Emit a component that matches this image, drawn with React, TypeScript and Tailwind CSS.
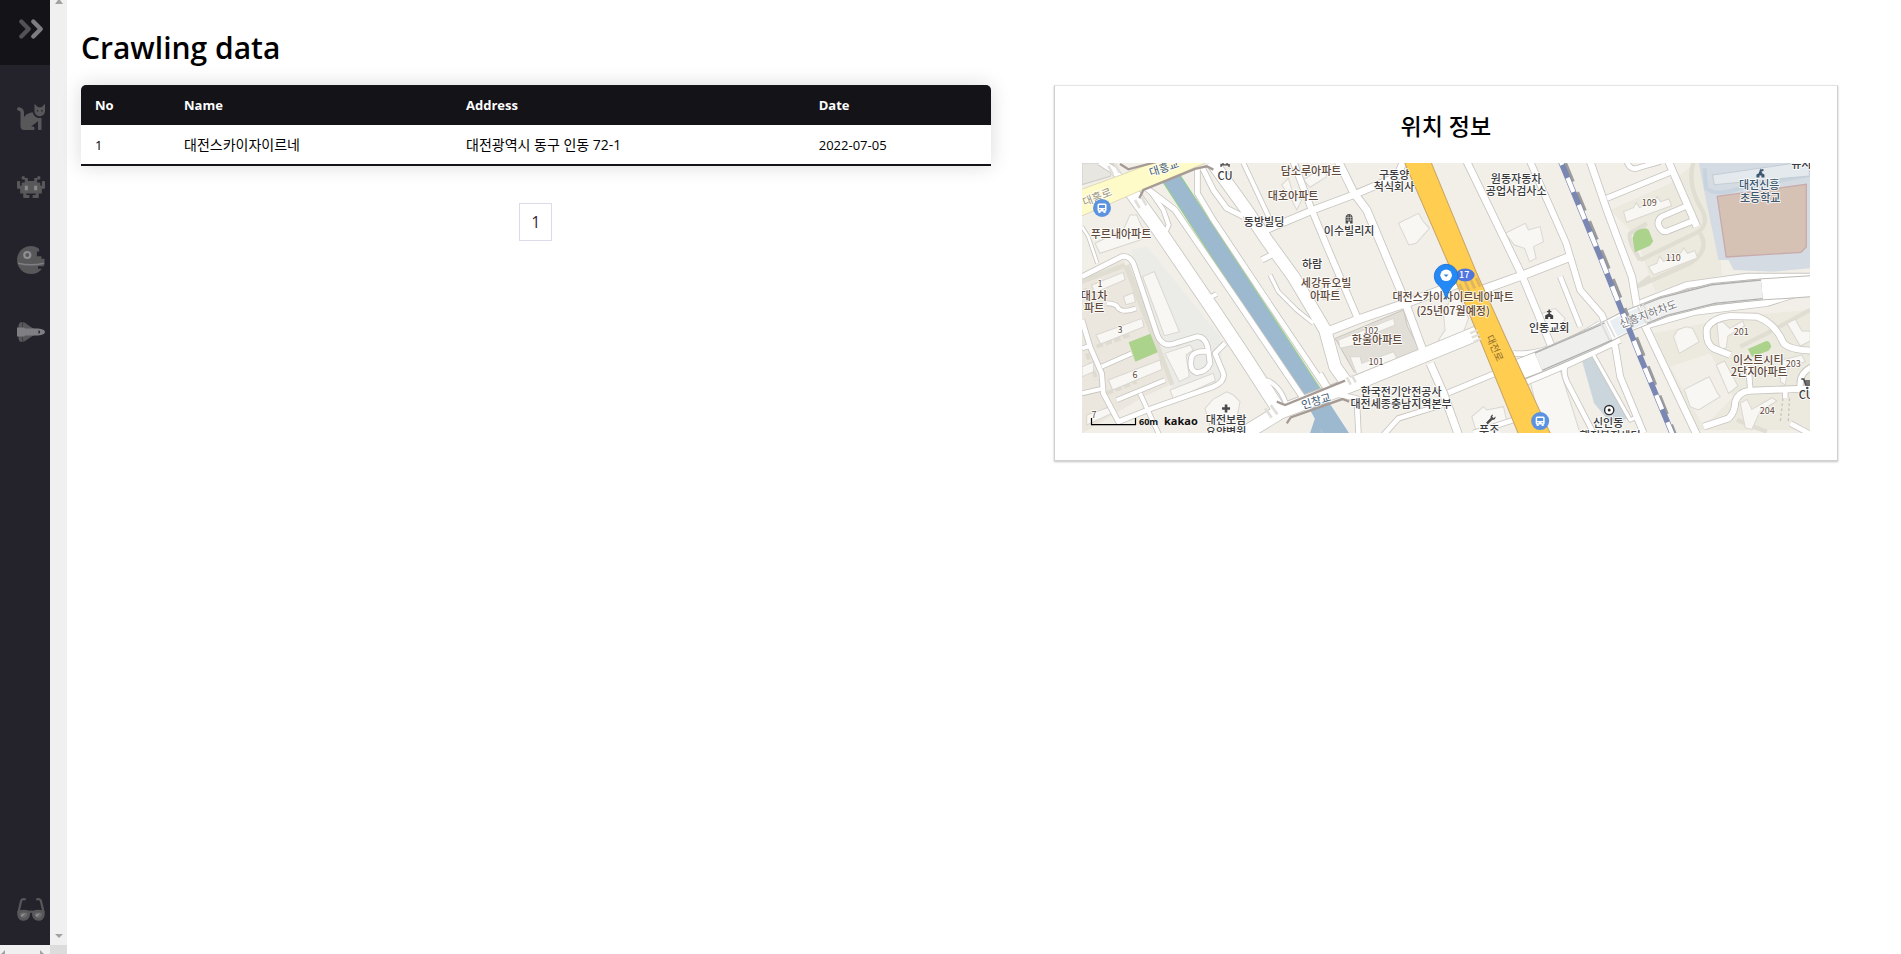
import React from "react";
import { FaCat } from "react-icons/fa";

const DIM = "#58585b";
const LIT = "#7f7f83";

function ChevronsIcon() {
  return (
    <svg viewBox="0 0 28 28" className="size-7" fill="none" strokeWidth="4.4" strokeLinecap="round" strokeLinejoin="round" aria-hidden="true">
      <path d="M4.300 6.500l7.400 7.500-7.400 7.500" stroke="#525254" />
      <path d="M16.300 6.500l7.400 7.500-7.400 7.500" stroke="#7d7d80" />
    </svg>
  );
}

function CatIcon() {
  return <FaCat className="size-7 text-[#58585b]" aria-hidden="true" />;
}

function AlienIcon() {
  return (
    <svg viewBox="0 -16 576 576" className="size-7" aria-hidden="true">
      <path
        fill={DIM}
        d="M560 128h-32a16 16 0 0 0-16 16v80h-32v-48a16 16 0 0 0-16-16h-48V96h48a16 16 0 0 0 16-16V48a16 16 0 0 0-16-16h-32a16 16 0 0 0-16 16v16h-48a16 16 0 0 0-16 16v48H224V80a16 16 0 0 0-16-16h-48V48a16 16 0 0 0-16-16h-32a16 16 0 0 0-16 16v32a16 16 0 0 0 16 16h48v64h-48a16 16 0 0 0-16 16v48H64v-80a16 16 0 0 0-16-16H16a16 16 0 0 0-16 16v128a16 16 0 0 0 16 16h48v80a16 16 0 0 0 16 16h48v80a16 16 0 0 0 16 16h96a16 16 0 0 0 16-16v-32a16 16 0 0 0-16-16h-48v-32h192v32h-48a16 16 0 0 0-16 16v32a16 16 0 0 0 16 16h96a16 16 0 0 0 16-16v-80h48a16 16 0 0 0 16-16v-80h48a16 16 0 0 0 16-16V144a16 16 0 0 0-16-16z"
      />
      <path fill="#8a8a8d" d="M160 224h64v96h-64zM352 224h64v96h-64z" />
    </svg>
  );
}

function DeathStarIcon() {
  return (
    <svg viewBox="0 0 28 28" className="size-7" aria-hidden="true">
      <path
        fill={DIM}
        d="M14 0C6.300 0 0 6.200 0 14s6.300 14 14 14c4.600 0 8.500-2 11-5.300h-4v-2.400h5.800L27.500 18V12.800h-3.100v-2.600h-4.500V5.600h2.500L21.800 2.500C19.500.9 17 0 14 0z"
      />
      <path d="M1.200 17.200Q14 20.500 26.800 17.200" stroke={LIT} strokeWidth="1.500" fill="none" />
      <circle cx="10.300" cy="9" r="3" fill={DIM} stroke="#8f8f92" strokeWidth="2.200" />
    </svg>
  );
}

function ShuttleIcon() {
  return (
    <svg viewBox="0 0 28 28" className="size-7" aria-hidden="true">
      <path
        fill={DIM}
        d="M1.500 14V7.500Q2 4 5 4q3 .2 6 3l4.500 3 3.500 1.500v5L15.500 18 11 21q-3 2.800-6 3-3 0-3.500-3.500z"
      />
      <path stroke="#3a3a3f" strokeWidth=".8" d="M5.500 4v20" />
      <path fill={LIT} d="M0 9.500h7l1 1h13q7 .8 7 3.500t-7 3.500H8l-1 1H0z" />
      <path fill="#24232c" d="M21.500 12.200q1.600.3 1.600 1.800t-1.600 1.800z" />
    </svg>
  );
}

function GlassesIcon() {
  return (
    <svg viewBox="0 0 28 28" className="size-7" aria-hidden="true">
      <path d="M1.500 17L4 6.200Q4.800 3.500 8 4.200M26.500 17L24 6.200Q23.200 3.500 20 4.200" fill="none" stroke={DIM} strokeWidth="2.200" strokeLinecap="round" />
      <path d="M11 17.500Q14 15.700 17 17.500" stroke={DIM} strokeWidth="2.400" fill="none" />
      <path
        d="M1.700 17Q6.500 15.200 11.700 17V19Q11 24.300 6.700 24.300Q2.200 24.300 1.700 19.500zM26.300 17Q21.500 15.200 16.300 17V19Q17 24.300 21.300 24.300Q25.800 24.300 26.300 19.500z"
        fill="#6a6a6d"
        stroke={DIM}
        strokeWidth="2.800"
        strokeLinejoin="round"
      />
      <path d="M4 20.500q1-2 4.500-2.300l-4 3.800zM18.700 20.500q1-2 4.500-2.300l-4 3.800z" fill="#97979a" />
    </svg>
  );
}

const navItems = [
  { label: "Cats", Icon: CatIcon },
  { label: "Aliens", Icon: AlienIcon },
  { label: "Space", Icon: DeathStarIcon },
  { label: "Shuttle", Icon: ShuttleIcon },
];

const rowsData = [{ no: 1, name: "대전스카이자이르네", address: "대전광역시 동구 인동 72-1", date: "2022-07-05" }];

type Road = [string, number];

const roads: Road[] = [
  ["M150 90L240 215L400 450L500 600L600 755", 40],
  ["M200 85L285 150L480 435L690 745", 16],
  ["M205 85L250 150L266 195L250 230", 12],
  ["M352 25L352 100L400 180L560 420L745 695", 15],
  ["M395 5L500 150L560 240L640 350L735 510L765 620L815 690", 36],
  ["M365 20L400 90L440 145L490 170", 15],
  ["M545 300l30-15", 16],
  ["M385 415l25-13", 12],
  ["M570 345L595 395L650 450L700 490", 10],
  ["M490 9L575 190", 12],
  ["M470 835L600 755L720 710L820 672L1020 590L1215 510", 42],
  ["M740 515L830 480L990 425L1130 372", 24],
  ["M1190 395L1330 345L1470 290", 24],
  ["M775 5L822 100L860 150L965 400L1035 590", 22],
  ["M640 5L695 150L745 270L835 480", 18],
  ["M545 215L700 150L820 105L950 50L970 5", 20],
  ["M1160 5L1325 345L1412 555", 20],
  ["M1350 5L1458 250L1500 390L1565 465L1605 560L1620 650L1690 819", 18],
  ["M1440 350L1500 500", 14],
  ["M1300 580Q1400 590 1560 490", 14],
  ["M1340 665L1460 615L1620 540", 16],
  ["M1460 610Q1445 630 1460 665L1540 819", 14],
  ["M1540 585L1650 780L1665 773", 10],
  ["M1050 610L1090 700L1135 825", 22],
  ["M1105 698L1245 640", 16],
  ["M910 825L955 775L1085 735", 14],
  ["M720 640L755 700L830 715L835 819", 14],
  ["M1180 819L1300 780", 14],
  ["M1530 5L1580 150L1655 350L1672 450L1710 530L1850 825", 20],
  ["M1580 115L1775 35", 16],
  ["M1640 5Q1650 35 1680 22L1740 5", 14],
  ["M1765 5L1850 200", 20],
  ["M1815 140L1745 170Q1725 185 1740 205Q1750 220 1765 212L1845 180", 16],
  ["M1680 430L1820 375L2000 350L2195 350", 18],
  ["M1700 495L1840 455L2060 428L2195 385", 20],
  ["M1950 585L1900 565Q1875 550 1880 505Q1895 475 1950 468L2030 470Q2085 490 2110 550Q2130 570 2195 572", 18],
  ["M2010 690L2005 620", 14],
  ["M1870 800L1945 775Q1965 755 1965 725Q1975 695 2010 692L2195 685", 18],
  ["M2115 690v24", 14],
  ["M2160 680Q2155 640 2195 620", 16],
  ["M2130 790L2195 825", 14],
  ["M6 350L125 290Q150 285 162 315L230 520Q245 565 285 550L350 530Q380 530 385 575L390 610Q380 635 350 638Q325 630 335 590Q345 570 385 575", 14],
  ["M6 480L30 560L65 640L70 700L115 785L215 745L400 680Q435 665 430 640L405 580L435 550", 14],
  ["M65 620L155 580M6 700L70 685M110 720L255 660M180 700L240 830M6 565L30 558", 12],
  ["M80 430Q110 430 115 445Q130 460 168 445", 12],
  ["M6 200L25 230L52 310", 8],
  ["M560 660Q605 680 620 740", 12],
  ["M60 5L100 30L150 90", 20],
];

const buildings = [
  "M45 250l85-40 20-45 20 0 15 35 25 20-30 20-120 40z",
  "M188 350l35-15 75 180-45 12z",
  "M35 375l95-38 5 22-92 40z",
  "M48 525l138-50 6 25-130 52z",
  "M85 660l155-60 6 28-148 62z",
  "M6 620l35-15v30l-35 15z",
  "M130 410l30-12 6 28-28 8z",
  "M255 580l75-25 10 15-22 15 10 65-30 15z",
  "M270 690l130-50 6 22-125 58z",
  "M375 745l25-28 40-22 20 10 20 20-10 50-80 25z",
  "M20 765l70-25 5 20-75 35z",
  "M605 75l20-20 15 50 25 15-15 30-15-30z",
  "M955 190l60-30 15 25 18 20-40 45-22 5z",
  "M670 60l60-40 10 30-50 32z",
  "M1275 220l60-30 10 20 35-10 10 45-30 15 8 35-20 10-15-40-30-10z",
  "M775 540l165-65 5 20-85 35-10 20-70 15z",
  "M810 590l30 0 5 20 95-35 10 20-120 48z",
  "M1075 540l20-30-5-50 20-40 30-5 25 60-20 55-55 20z",
  "M1175 770l35-30 10 10 50-10 10 45-60 30-30 5z",
  "M1350 665l90-35 60 190h-110z",
  "M1375 465l50-20 30 30-15 30-45 20z",
  "M1630 155l30-12 8-15 10 15 45-18 8-15 10 15 25-8 8 20-135 50z",
  "M1705 320l25-10 8-22 12 16 50-22 10-18 12 16 22-8 8 22-132 50z",
  "M1780 530l12-20 25-10 20 5 20 40-60 35z",
  "M1812 688l75-38 25 50 8 10-65 40-25-10z",
  "M1910 490l18-5 20 20 40-22 5 15-50 30-5 35-20 10z",
  "M1908 615l25-12 40 75-28 22z",
  "M2120 490l25-12 20 35 25 0v30l-30 15z",
  "M2105 600l60-15 10 20-50 15-10 55-15-10z",
  "M1980 730l20-12 15 30 60-35 15 10-50 30-25 55-20-5z",
  "M720 390l50-45 20 30-60 45z",
  "M1170 395l-20 50 50-20z",
];

const rail = "M1440 0L1560 290L1680 590L1780 830";

function RoadLayer() {
  return (
    <g fill="none" strokeLinejoin="round">
      <g stroke="#c9c6c1">
        {roads.map(([d, w]) => (
          <path key={d} d={d} strokeWidth={w + 5} />
        ))}
      </g>
      <g stroke="#ffffff">
        {roads.map(([d, w]) => (
          <path key={d} d={d} strokeWidth={w} />
        ))}
      </g>
    </g>
  );
}

type Label = { x: number; y: number; t: string; c: string; s?: string; r?: number };
const BROWN = "#5f4a3c";
const DARK = "#3a3a3c";
const NAVY = "#3c5870";

const labels: Label[] = [
  { x: 82, y: 5, t: "대흥교", c: NAVY, r: -18 },
  { x: 15, y: 34, t: "대흥로", c: "#99937e", r: -22 },
  { x: 143, y: 13, t: "CU", c: DARK },
  { x: 229, y: 8, t: "담소루아파트", c: BROWN },
  { x: 211, y: 33, t: "대호아파트", c: BROWN },
  { x: 182, y: 59, t: "동방빌딩", c: DARK },
  { x: 39, y: 71, t: "푸르내아파트", c: BROWN },
  { x: 230, y: 101, t: "하람", c: DARK },
  { x: 244, y: 120, t: "세강듀오빌", c: BROWN },
  { x: 243, y: 133, t: "아파트", c: BROWN },
  { x: 12, y: 133, t: "대1차", c: BROWN },
  { x: 9, y: 145, t: "·파트", c: BROWN },
  { x: 18, y: 120, t: "1", c: BROWN, s: "n" },
  { x: 38, y: 166, t: "3", c: BROWN, s: "n" },
  { x: 53, y: 211, t: "6", c: BROWN, s: "n" },
  { x: 12, y: 251, t: "7", c: BROWN, s: "n" },
  { x: 144, y: 257, t: "대전보람", c: DARK },
  { x: 144, y: 269, t: "요양병원", c: DARK },
  { x: 234, y: 238, t: "인창교", c: NAVY, r: -17 },
  { x: 312, y: 12, t: "구동양", c: DARK },
  { x: 312, y: 24, t: "척식회사", c: DARK },
  { x: 267, y: 68, t: "이수빌리지", c: DARK },
  { x: 434, y: 16, t: "원동자동차", c: DARK },
  { x: 434, y: 28, t: "공업사검사소", c: DARK },
  { x: 371, y: 134, t: "대전스카이자이르네아파트", c: BROWN },
  { x: 371, y: 148, t: "(25년07월예정)", c: BROWN },
  { x: 467, y: 165, t: "인동교회", c: DARK },
  { x: 289, y: 167, t: "102", c: BROWN, s: "n" },
  { x: 295, y: 177, t: "한울아파트", c: BROWN },
  { x: 294, y: 198, t: "101", c: BROWN, s: "n" },
  { x: 319, y: 229, t: "한국전기안전공사", c: DARK },
  { x: 319, y: 241, t: "대전세종충남지역본부", c: DARK },
  { x: 407, y: 267, t: "푸조", c: DARK },
  { x: 567, y: 39, t: "109", c: BROWN, s: "n" },
  { x: 591, y: 94, t: "110", c: BROWN, s: "n" },
  { x: 677, y: 22, t: "대전신흥", c: NAVY },
  { x: 678, y: 35, t: "초등학교", c: NAVY },
  { x: 719, y: 1, t: "뮤지", c: DARK },
  { x: 566, y: 151, t: "신흥지하차도", c: "#77777a", r: -20 },
  { x: 659, y: 168, t: "201", c: BROWN, s: "n" },
  { x: 676, y: 197, t: "이스트시티", c: BROWN },
  { x: 677, y: 209, t: "2단지아파트", c: BROWN },
  { x: 711, y: 200, t: "203", c: BROWN, s: "n" },
  { x: 685, y: 247, t: "204", c: BROWN, s: "n" },
  { x: 724, y: 232, t: "CU", c: DARK },
  { x: 526, y: 260, t: "신인동", c: DARK },
  { x: 528, y: 273, t: "행정복지센터", c: DARK },
];

function BusStop({ x, y }: { x: number; y: number }) {
  return (
    <g transform={`translate(${x} ${y})`}>
      <circle r="9" fill="#5b93e0" />
      <rect x="-4.500" y="-4.500" width="9" height="8" rx="1.500" fill="#fff" />
      <path d="M-3.500 3h2v2h-2zM1.500 3h2v2h-2z" fill="#fff" />
      <path d="M-3-3h6v3h-6zM-3 1.200h1.500v1H-3zM1.500 1.200H3v1H1.500z" fill="#5b93e0" />
    </g>
  );
}

function LocationMap() {
  return (
    <svg viewBox="0 0 728 270" preserveAspectRatio="xMidYMid slice" className="block h-[270px] w-full" role="img" aria-label="지도">
      <rect width="728" height="270" fill="#f2efe9" />
      <g transform="scale(.333333) translate(-6 -9)">
        <path fill="#ebebe7" d="M155 270l45-10 220 270 10 130-140 60-80-200z" />
        <path fill="#ebe7de" d="M6 350l125-50 150 370-90 40-185 110z" />
        <path fill="#e0ddd3" d="M6 355l125-45 8 12-133 50zM130 320l18-8 135 360-12 5z" />
        <path fill="none" stroke="#dedbd1" strokeWidth="12" strokeDasharray="20 8" d="M15 385l20 70M50 560l100-35M20 580l30 80M80 700l90-35M130 780l70-25" />
        <path fill="#e8e6e1" stroke="#cfccc7" strokeWidth="3" d="M6 9h95l-10 40-85 25z" />
        <path fill="#e2dfd8" stroke="#c9c6c0" strokeWidth="3" d="M765 535l205-85 12 50 40 75-165 75-35-15z" />
        <path fill="#ece9df" d="M1590 150l180-80 80-65h45l30 340-200 50-60-170zM1720 520l280-55 190-15v360h-340z" />
        <path fill="#f2efe9" d="M1770 620l120-40 70 130-90 90z" />
        <path fill="none" stroke="#e0ded3" strokeWidth="13" d="M1840 5Q1820 70 1860 140Q1890 190 1855 215L1680 300M1860 220Q1890 270 1830 310L1670 380L1710 350M1680 300Q1640 240 1650 220L1700 190M1980 560L2060 520L2190 450M1970 780L2060 815" />
        <path fill="#d4dbe2" d="M1855 5h335v320l-110 10-120-5-15-30h-30l-42-200z" />
        <path fill="none" stroke="#c7d3dd" strokeWidth="12" d="M1873 25l5 60q30 25 100 0l212-40" />
        <path fill="#e4e9ed" stroke="#c3cdd5" strokeWidth="3" d="M1897 45l290-42v45l-285 26z" />
        <path fill="#d6c2b5" stroke="#c8abac" strokeWidth="4" d="M1911 109l267-36v188l-16 16-224 14z" />
        <path fill="#abd38c" d="M146 547l65-26 22 56-67 28z" />
        <path fill="#abd38c" d="M1657 235q5-30 40-30l8 4 14 35-10 13-45 20zM2003 567l55-24q12 0 15 17l-8 12-50 18z" />
        <path fill="#cbd6dc" d="M1502 590l35-10 105 195-50 15-50-60z" />
        <g fill="#f8f7f4" stroke="#dad7d1" strokeWidth="3">
          {buildings.map((d) => (
            <path key={d} d={d} />
          ))}
        </g>
        <path fill="#9db9cf" d="M250 68l50-24 425 650 85 130h-80l-35-65-30-50z" />
        <path fill="none" stroke="#93cf86" strokeWidth="3" d="M300 46l425 646M250 68l280 430" />
        <path fill="#9db9cf" d="M708 765l-20 60h40z" />
        <RoadLayer />
        <path fill="none" stroke="#bdbab5" strokeWidth="66" d="M1310 632L1390 600L1550 530L1640 484L1750 440L1900 402L2050 388L2200 378" />
        <path fill="none" stroke="#fff" strokeWidth="60" d="M1300 635L1390 600L1550 530L1640 484L1750 440L1900 402L2050 388L2200 378" />
        <path fill="none" stroke="#b0b0b0" strokeWidth="60" d="M1375 605L1550 530L1585 514M1690 464L1750 440L1900 402L2045 388" />
        <path fill="none" stroke="#efefee" strokeWidth="52" d="M1375 605L1550 530L1585 514M1690 464L1750 440L1900 402L2045 388" />
        <path fill="none" stroke="#e9eef3" strokeWidth="52" d="M1600 506L1640 486L1685 466" />
        <path fill="none" stroke="#dcdcda" strokeWidth="5" d="M1562 488l26 52M1578 480l26 52M1672 438l26 52M1688 432l26 52" />
        <path fill="none" stroke="#9d9c98" strokeWidth="12" strokeDasharray="60 34" d="M1455 10L1575 300L1695 600L1785 825" />
        <path fill="none" stroke="#7b87b3" strokeWidth="17" d={rail} />
        <path fill="none" stroke="#fff" strokeWidth="13" strokeDasharray="46 42" strokeDashoffset="-58" d={rail} />
        <path fill="#fffbc9" stroke="#cfcaa8" strokeWidth="2" d="M0 90l150-55 75-30h160L200 84 0 170z" />
        <path fill="none" stroke="#a69b94" strokeWidth="7" d="M120 12l25 16 85-22M178 115l12-25L345 27l35-8 20 10" />
        <path fill="none" stroke="#a69b94" strokeWidth="7" d="M590 725l25 10 180-73M620 790l12-18 155-55 20 8" />
        <path fill="none" stroke="#e2dfda" strokeWidth="8" d="M165 120l14 24M185 112l14 24M85 18l14 26M105 12l14 26M555 745l20 28M572 735l20 28M800 652l12 22M815 645l12 22" />
        <path fill="#ffcd50" stroke="#c8a565" strokeWidth="3" d="M970 0l130 300 100 240 118 290h97l-135-290-90-200L1050 0z" />
        <path fill="none" stroke="#ddb561" strokeWidth="8" d="M1138 372l12 26M1155 366l12 26M1172 360l12 26M1188 354l12 26" />
        <path fill="none" stroke="#e2dfda" strokeWidth="7" d="M1170 520l22-10M1175 533l22-10M1180 546l22-10" />
        <path fill="none" stroke="#c7c4be" strokeWidth="4" strokeDasharray="8 7" d="M2108 715l-8 70M2128 715l-4 70" />
      </g>

      <g fontFamily="'Noto Sans CJK KR', sans-serif" textAnchor="middle" stroke="#fff" strokeOpacity=".75" strokeWidth="2" paintOrder="stroke" strokeLinejoin="round">
        {labels.map((l) => (
          <text
            key={`${l.x}-${l.y}`}
            x={l.x}
            y={l.y + 4}
            fill={l.c}
            fontSize={l.s ? 9 : 11}
            fontWeight={l.r || l.s ? 400 : 500}
            transform={l.r ? `rotate(${l.r} ${l.x} ${l.y})` : undefined}
          >
            {l.t}
          </text>
        ))}
      </g>
      <text x="413" y="189" fontSize="10" textAnchor="middle" fill="#8a6a2c" fontFamily="'Noto Sans CJK KR', sans-serif" transform="rotate(66 413 185)">
        대전로
      </text>

      <path d="M142.700 241.500h2.600v2.700h2.700v2.600h-2.700v2.700h-2.600v-2.700H140v-2.600h2.700z" fill="#4a4a4c" />
      <path d="M263.500 60.500v-6.500l1-2q2.500-2 5 0l1 2v6.500h-2.500v-2h-2v2z" fill="#4a4a4c" />
      <path d="M263.500 54.500h7M263.500 57h7M266 52v6M268.500 52v6" stroke="#f2efe9" strokeWidth=".5" />
      <path d="M466.300 146.500h1.400v1.500h1.500v1.300h-1.500v1.200l3.300 2v3.500h-3v-2h-2v2h-3v-3.500l3.300-2v-1.200h-1.500V148h1.500z" fill="#3f3f41" />
      <path d="M678 5l.2 1.500 3-.5v2l-2 .5 1 2 2 1v3h-3v-2h-2v2h-3v-3l2-1 1-2z" fill={NAVY} />
      <path d="M404 259.500l4.500-4.500q-.5-3 2.500-3.500l-1 2.500 1.500 1 2-1.500q0 3.500-3.500 3.500l-4.500 4.500z" fill="#4a4a4c" />
      <path d="M139 1v3M147 1v3M139 2h8M141 0v2M145 0v2" stroke="#4a4a4c" strokeWidth="1.300" />
      <path d="M719 216h2.500l2 6h6M722 218h8M722.500 220h8" stroke="#4a4a4c" strokeWidth="1.500" fill="none" />
      <circle cx="725" cy="225" r="1.300" fill="#4a4a4c" />
      <circle cx="527" cy="247" r="4.600" fill="#fff" stroke="#2c2c2e" strokeWidth="1.400" />
      <circle cx="527" cy="247" r="1.500" fill="#2c2c2e" />

      <BusStop x={20} y={45} />
      <BusStop x={458} y={258} />

      <ellipse cx="383" cy="112" rx="9.500" ry="6.500" fill="#4f76df" />
      <text x="382" y="115" fontSize="9" fontWeight="500" fill="#fff" textAnchor="middle" fontFamily="'Noto Sans CJK KR', sans-serif">
        17
      </text>
      <path d="M364 136.500q-1.500-8-6.500-13.500a11.800 11.800 0 1 1 13 0q-5 5.500-6.500 13.500z" fill="#2489f5" stroke="#1769c9" strokeWidth=".8" />
      <circle cx="364" cy="112.300" r="5.800" fill="#fff" />
      <path d="M361.500 111.500h5l-2.500 2.500z" fill="#3c86d0" />

      <path d="M9.500 255v6.500h44V255" fill="none" stroke="#000" strokeWidth="1.200" />
      <text x="57" y="262" fontSize="9" fontWeight="700" fontFamily="'Open Sans', sans-serif" fill="#111">
        60m
      </text>
      <text x="82" y="262" fontSize="11" fontWeight="700" fontFamily="'Open Sans', sans-serif" fill="#111">
        kakao
      </text>
    </svg>
  );
}

function Arrow({ className, box, d }: { className: string; box: string; d: string }) {
  return (
    <svg viewBox={box} className={className} fill="#a3a3a3" aria-hidden="true">
      <path d={d} />
    </svg>
  );
}

export default function App() {
  return (
    <div className="flex h-screen overflow-hidden bg-white font-['Open_Sans','Noto_Sans_CJK_KR',sans-serif] text-black">
      <aside className="flex w-[50px] shrink-0 flex-col bg-[#24232c]">
        <button type="button" aria-label="Expand menu" className="flex h-[65px] shrink-0 items-start bg-[#141318] pt-[15px] pl-[17px]">
          <ChevronsIcon />
        </button>
        <nav className="flex grow flex-col pt-[15px]">
          {navItems.map(({ label, Icon }) => (
            <a key={label} href="#" aria-label={label} className="flex h-[72px] items-center pl-[17px]">
              <Icon />
            </a>
          ))}
          <a href="#" aria-label="Theme" className="mt-auto flex h-[72px] items-center pl-[17px]">
            <GlassesIcon />
          </a>
        </nav>
        <div className="flex h-[9px] shrink-0 items-end justify-between bg-[#f0f0f0] pr-1.5 pl-px">
          <Arrow className="h-1 w-1" box="0 0 4 4" d="M4 0v4H0z" />
          <Arrow className="h-1 w-1" box="0 0 4 4" d="M0 0v4h4z" />
        </div>
      </aside>
      <div className="flex w-[17px] shrink-0 flex-col items-center justify-between bg-[#f0f0f0]">
        <Arrow className="h-1 w-2" box="0 0 8 4" d="M3 0h2l3 4H0z" />
        <div className="flex w-full flex-col items-center">
          <Arrow className="mb-[7px] h-1 w-2" box="0 0 8 4" d="M0 0h8L4 4z" />
          <div className="h-[9px] w-full bg-[#dcdcdc]" />
        </div>
      </div>

      <main className="min-w-0 grow pt-[27px] pr-[63px] pl-[14px]">
        <h1 className="mb-4 text-[30px] leading-[42px] font-semibold">Crawling data</h1>
        <div className="grid grid-cols-[1.16fr_1fr] items-start gap-[63px]">
          <section>
            <table className="w-full table-fixed overflow-hidden rounded-t-[5px] text-left text-[13px] shadow-[0_0_20px_rgba(0,0,0,0.15)]">
              <colgroup>
                <col className="w-[89px]" />
                <col className="w-[31%]" />
                <col />
                <col className="w-[186px]" />
              </colgroup>
              <thead>
                <tr className="h-10 bg-[#141318] text-white">
                  {["No", "Name", "Address", "Date"].map((h) => (
                    <th key={h} className="px-[14px] pt-0.5 font-bold">
                      {h}
                    </th>
                  ))}
                </tr>
              </thead>
              <tbody>
                {rowsData.map((r) => (
                  <tr key={r.no} className="h-10 border-b-2 border-[#141318] leading-5">
                    <td className="px-[14px]">{r.no}</td>
                    <td className="px-[14px] text-sm">{r.name}</td>
                    <td className="px-[14px] text-sm">{r.address}</td>
                    <td className="px-[14px]">{r.date}</td>
                  </tr>
                ))}
              </tbody>
            </table>
            <nav aria-label="Pages" className="mt-[37px] flex justify-center">
              <button type="button" className="h-[38px] w-[33px] border border-[#dddbe8] text-base text-[#3b1e3f]">
                1
              </button>
            </nav>
          </section>

          <section className="border border-[#d0d0d0] border-t-[#e4e4e4] px-[27px] pb-[27px] shadow-[0_1px_2px_rgba(0,0,0,0.25)]">
            <h2 className="pt-6 pb-5 text-center text-[23px] leading-[33px] font-medium">위치 정보</h2>
            <LocationMap />
          </section>
        </div>
      </main>
    </div>
  );
}
